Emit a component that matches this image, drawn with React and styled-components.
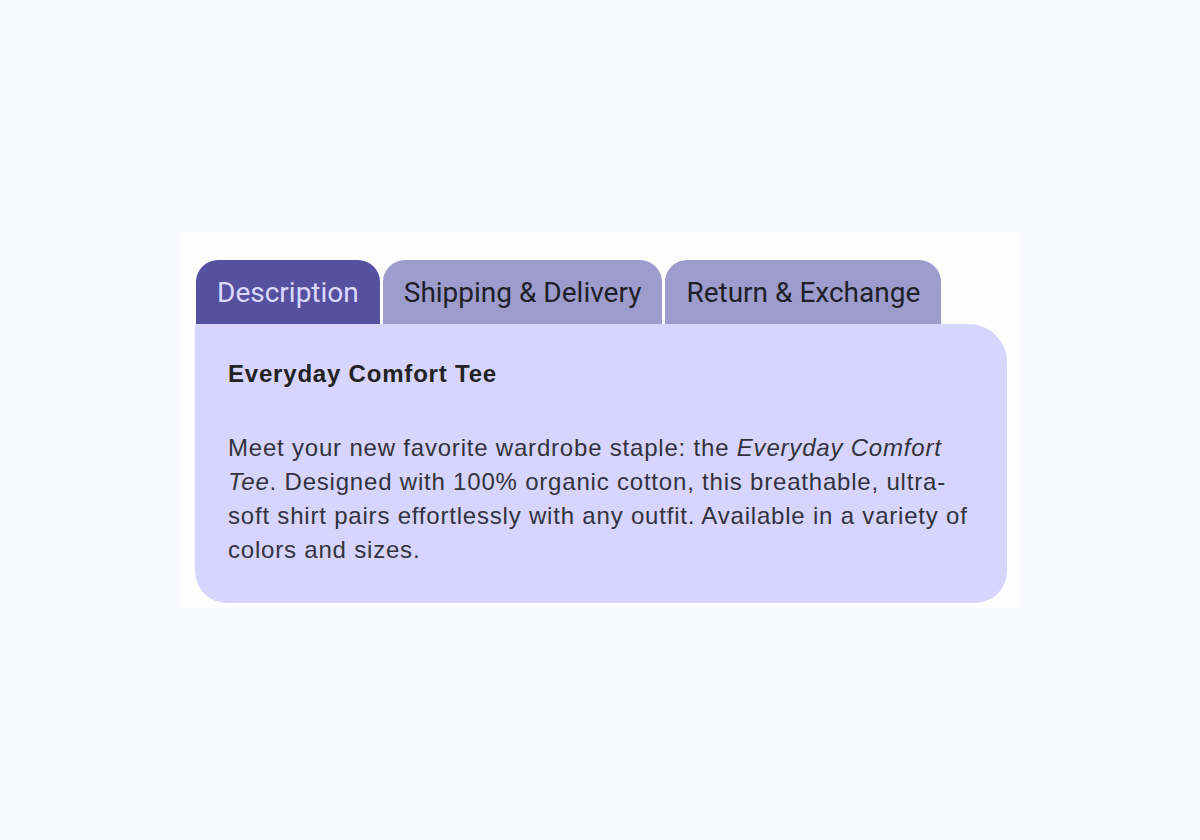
import { useState } from "react";
import styled, { createGlobalStyle } from "styled-components";

const GlobalStyle = createGlobalStyle`
  html, body {
    margin: 0;
    padding: 0;
    background: #f8f9fc;
  }
  body {
    font-family: "Liberation Sans", Arial, sans-serif;
  }
`;

const Page = styled.div`
  width: 1200px;
  height: 840px;
  display: flex;
  align-items: flex-start;
  justify-content: center;
  padding-top: 232px;
  box-sizing: border-box;
`;

const Card = styled.div`
  width: 840px;
  box-sizing: border-box;
  background: #fdfdfe;
  padding: 28px 13px 5px 15px;
`;

const TabBar = styled.div`
  display: flex;
  gap: 3px;
  padding-left: 1px;
`;

const Tab = styled.button`
  height: 64px;
  border: none;
  border-radius: 22px 22px 0 0;
  padding: 0 21px;
  font-family: Roboto, "Liberation Sans", sans-serif;
  font-size: 28px;
  color: ${(p) => (p.$active ? "#dcd9ff" : "#1f1f2a")};
  background: ${(p) => (p.$active ? "#55519f" : "#9e9ccc")};
  cursor: pointer;
`;

const Panel = styled.div`
  background: #d7d5fe;
  border-radius: 0 38px 32px 32px;
  padding: 36px 33px 36px 33px;
  color: #2b2b33;
`;

const Title = styled.h3`
  margin: 0 0 43px;
  font-size: 24px;
  letter-spacing: 0.8px;
  font-weight: bold;
  color: #222;
`;

const Text = styled.p`
  margin: 0;
  font-size: 24px;
  letter-spacing: 0.8px;
  line-height: 34px;
  color: #33333d;
`;

const tabs = ["Description", "Shipping & Delivery", "Return & Exchange"];

export default function App() {
  const [active, setActive] = useState(0);
  return (
    <>
      <GlobalStyle />
      <Page>
        <Card>
          <TabBar>
            {tabs.map((t, i) => (
              <Tab key={t} $active={i === active} onClick={() => setActive(i)}>
                {t}
              </Tab>
            ))}
          </TabBar>
          <Panel>
            <Title>Everyday Comfort Tee</Title>
            <Text>
              Meet your new favorite wardrobe staple: the <em>Everyday Comfort Tee</em>.
              Designed with 100% organic cotton, this breathable, ultra-soft shirt pairs
              effortlessly with any outfit. Available in a variety of colors and sizes.
            </Text>
          </Panel>
        </Card>
      </Page>
    </>
  );
}
